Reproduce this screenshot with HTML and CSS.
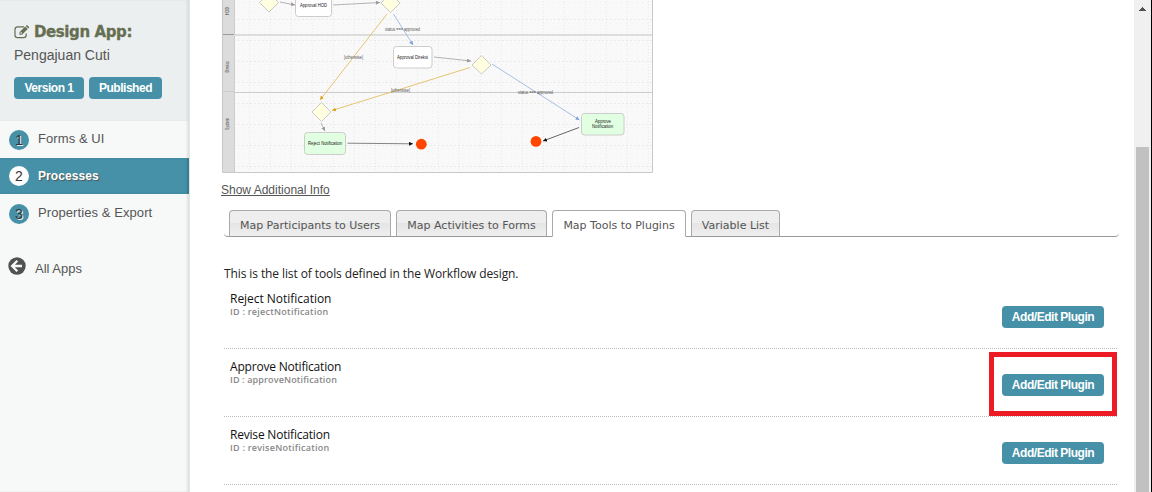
FILE: index.html
```html
<!DOCTYPE html>
<html lang="en">
<head>
<meta charset="utf-8">
<title>Design App: Pengajuan Cuti</title>
<link rel="stylesheet" href="styles.css">
</head>
<body>
<div class="app">
  <aside class="sidebar">
    <header class="app-head">
      <h1 class="app-title"><svg class="edit-icon" viewBox="0 0 16 14" width="16" height="14"><path d="M10 1.8H3.5Q1 1.8 1 4.2v6.1q0 2.4 2.5 2.4h6.2q2.5 0 2.5-2.4V8.5" fill="none" stroke="currentColor" stroke-width="1.2"/><path fill-rule="evenodd" d="M5.5 7.2 11.2 1.5 13.7 4 8 9.7H5.5zM6.4 7.7v1h1l.8-.8-1-1zM11.8.9l.5-.5q.6-.6 1.2 0l1.3 1.3q.6.6 0 1.2l-.5.5z" fill="currentColor"/></svg><span class="title-text">Design App:</span></h1>
      <div class="app-name">Pengajuan Cuti</div>
      <div class="badges"><span class="button version">Version 1</span><span class="button published">Published</span></div>
    </header>
    <nav class="nav">
      <a class="nav-item"><span class="step">1</span>Forms &amp; UI</a>
      <a class="nav-item active"><span class="step">2</span>Processes</a>
      <a class="nav-item"><span class="step">3</span>Properties &amp; Export</a>
    </nav>
    <a class="all-apps"><svg width="18" height="18" viewBox="0 0 18 18"><circle cx="9" cy="9" r="8.7" fill="#505252"/><path d="M9.3 3.8 4.1 9l5.2 5.2M4.8 9h9.2" fill="none" stroke="#f7f9f8" stroke-width="2.3"/></svg>All Apps</a>
  </aside>
  <main class="main">
    <svg class="diagram" width="432" height="173" viewBox="222 0 432 173">
      <defs>
        <pattern id="minor" x="222" y="2" width="5.25" height="5.2" patternUnits="userSpaceOnUse"><rect width="1" height="1" fill="#efefef"/></pattern>
        <pattern id="dots" x="228" y="19" width="21" height="3" patternUnits="userSpaceOnUse"><rect width="1" height="1" fill="#ebebeb"/></pattern>
        <pattern id="rows" x="222" y="19" width="4" height="21" patternUnits="userSpaceOnUse"><rect width="1.5" height="1" fill="#e5e5e5"/></pattern>
        <marker id="gray" markerWidth="5" markerHeight="5" refX="4" refY="2" orient="auto" markerUnits="userSpaceOnUse"><path d="M0 0 4 2 0 4z" fill="#999"/></marker>
        <marker id="black" markerWidth="5" markerHeight="5" refX="4" refY="2" orient="auto" markerUnits="userSpaceOnUse"><path d="M0 0 4 2 0 4z" fill="#111"/></marker>
        <marker id="gold" markerWidth="5" markerHeight="5" refX="4" refY="2" orient="auto" markerUnits="userSpaceOnUse"><path d="M0 0 4 2 0 4z" fill="#d9a520"/></marker>
        <marker id="blue" markerWidth="5" markerHeight="5" refX="4" refY="2" orient="auto" markerUnits="userSpaceOnUse"><path d="M0 0 4 2 0 4z" fill="#7d9fdd"/></marker>
      </defs>
      <rect x="222" width="431" height="173" fill="#f9f9f9"/>
      <rect x="234" width="418" height="172" fill="url(#minor)"/>
      <rect x="234" width="418" height="172" fill="url(#dots)"/>
      <rect x="234" width="418" height="172" fill="url(#rows)"/>
      <rect x="222" width="12" height="172" fill="#dcdcdc"/>
      <path d="M234.5 0V172" stroke="#ccc"/>
      <path d="M234 35H652" stroke="#ddd" stroke-width="2"/>
      <path d="M222 34.5H234" stroke="#999"/>
      <path d="M234 92.5H652M222 91.5H234" stroke="#ccc"/>
      <path d="M222.5 0V172.5H652.5V0" fill="none" stroke="#c8c8c8"/>
      <g class="lane" text-anchor="middle">
        <text transform="translate(229 11) rotate(-90)" textLength="8" lengthAdjust="spacingAndGlyphs">HOD</text>
        <text transform="translate(229 67) rotate(-90)" textLength="11" lengthAdjust="spacingAndGlyphs">Direksi</text>
        <text transform="translate(229 124) rotate(-90)" textLength="12" lengthAdjust="spacingAndGlyphs">System</text>
      </g>
      <g fill="none" stroke-width=".9">
        <g stroke="#aaa"><path d="M280 2 295 5" marker-end="url(#gray)"/><path d="M333 5 380 2.5" marker-end="url(#gray)"/><path d="M434 57 471 61" marker-end="url(#gray)"/><path d="M321 123 325 131" marker-end="url(#gray)"/></g>
        <g stroke="#e4bd62"><path d="M387 14 320 100" marker-end="url(#gold)"/><path d="M470 67.5 332 110.5" marker-end="url(#gold)"/></g>
        <g stroke="#9eb7e3"><path d="M393.500 14 413 45" marker-end="url(#blue)"/><path d="M492 64 579.500 120" marker-end="url(#blue)"/></g>
        <path d="M347.500 143.200 413 143.800" stroke="#777" marker-end="url(#black)"/><path d="M579 127.500 543 141" stroke="#555" marker-end="url(#black)"/>
      </g>
      <g fill="#ffffdf" stroke="#c9c9c9"><path d="M269-7 278.500 2.500 269 12 259.500 2.500z"/><path d="M390.500-6.500 400 3 390.500 12.500 381 3z"/><path d="M481.500 55.500 491 65 481.500 74 472 65z"/><path d="M321.500 102.500 331 112 321.500 121.500 312 112z"/></g>
      <g fill="#fff" stroke="#ccc"><rect x="295.500" y="-5" width="36" height="21.500" rx="3"/><rect x="393.500" y="46.500" width="38.500" height="21.500" rx="3"/></g>
      <g fill="#e1ffe1" stroke="#ccc"><rect x="304.500" y="132.500" width="41" height="22" rx="3"/><rect x="581.500" y="113.500" width="42.500" height="21.500" rx="3"/></g>
      <circle cx="421.300" cy="144.200" r="5.400" fill="#ff4500"/><circle cx="536" cy="141.400" r="5.400" fill="#ff4500"/>
      <g class="node">
        <text x="300" y="7" textLength="27" lengthAdjust="spacingAndGlyphs">Approval HOD</text>
        <text x="397" y="59" textLength="31" lengthAdjust="spacingAndGlyphs">Approval Direksi</text>
        <text x="308" y="145.300" textLength="34" lengthAdjust="spacingAndGlyphs">Reject Notification</text>
        <text x="595" y="123" textLength="16" lengthAdjust="spacingAndGlyphs">Approve</text>
        <text x="592" y="128.200" textLength="21" lengthAdjust="spacingAndGlyphs">Notification</text>
      </g>
      <g class="edge-label">
        <text x="385" y="31" textLength="35" lengthAdjust="spacingAndGlyphs">status === approved</text>
        <text x="344" y="59" textLength="19" lengthAdjust="spacingAndGlyphs">[otherwise]</text>
        <text x="391" y="91.500" textLength="19" lengthAdjust="spacingAndGlyphs">[otherwise]</text>
        <text x="518" y="94" textLength="35" lengthAdjust="spacingAndGlyphs">status === approved</text>
      </g>
    </svg>
    <a class="info-link">Show Additional Info</a>
    <div class="tabs">
      <a class="tab participants">Map Participants to Users</a>
      <a class="tab activities">Map Activities to Forms</a>
      <a class="tab tools selected">Map Tools to Plugins</a>
      <a class="tab variables">Variable List</a>
    </div>
    <section class="panel">
      <p class="intro">This is the list of tools defined in the Workflow design.</p>
      <div class="tool"><div class="tool-text"><div class="tool-name n1">Reject Notification</div><div class="tool-id i1">ID : rejectNotification</div></div><span class="button plugin">Add/Edit Plugin</span></div>
      <div class="tool marked"><div class="tool-text"><div class="tool-name n2">Approve Notification</div><div class="tool-id i2">ID : approveNotification</div></div><span class="button plugin">Add/Edit Plugin</span></div>
      <div class="tool"><div class="tool-text"><div class="tool-name n3">Revise Notification</div><div class="tool-id i3">ID : reviseNotification</div></div><span class="button plugin">Add/Edit Plugin</span></div>
    </section>
  </main>
  <div class="scrollbar"><svg width="7" height="4" viewBox="0 0 7 4" shape-rendering="crispEdges"><path d="M3 0h1v1h1v1h1v1h1v1H0V3h1V2h1V1h1z" fill="#505050"/></svg><div class="thumb"></div></div>
</div>
</body>
</html>
```
FILE: styles.css
```css
*, *::after { box-sizing: border-box; }
body { margin: 0; background: #fff; font-family: "Liberation Sans", Arial, sans-serif; color: #555; }
.app { display: flex; width: 1152px; height: 492px; overflow: hidden; }

.sidebar { width: 190px; flex: none; background: #f7f9f8; border-right: 1px solid #e4e5e5; box-shadow: inset -2px 0 2px #dfe2e2; }
.app-head { height: 121px; padding: 22px 0 0 14px; background: #ebeff0; box-shadow: inset -2px 0 2px #d9dddd; }
.app-title { display: flex; align-items: center; gap: 4px; margin: 0; height: 20px; color: #666e51; font: bold 15px/20px "DejaVu Sans", Verdana, sans-serif; }
.edit-icon { flex: none; }
.title-text { white-space: nowrap; letter-spacing: -.4px; -webkit-text-stroke: .3px #666e51; }
.app-name { margin-top: 4px; font-size: 14px; line-height: 18px; }
.badges { display: flex; gap: 5px; margin-top: 13px; }
.button { display: flex; align-items: center; justify-content: center; height: 22px; border-radius: 4px; background: #4691a8; color: #fff; font-size: 12px; font-weight: bold; letter-spacing: -.47px; white-space: nowrap; }
.version { width: 70px; }
.published { width: 73px; }
.nav { display: flex; flex-direction: column; }
.nav-item { display: flex; align-items: center; gap: 9px; height: 37px; padding: 0 0 2px 9px; font-size: 13px; letter-spacing: .08px; }
.step { display: flex; align-items: center; justify-content: center; width: 20px; height: 20px; border-radius: 50%; background: #4691a8; color: #333; font-size: 14px; text-shadow: 1px 1px 0 #eee; margin-top: 2px; }
.active { height: 36px; padding-bottom: 0; margin-bottom: 1px; background: #4691a8; color: #fff; font-size: 12px; font-weight: bold; text-shadow: 1px 1px 1px #555; box-shadow: inset -2px 0 2px #39798d; }
.active .step { background: #fff; color: #333; font-weight: normal; text-shadow: none; margin-top: 0; }
.all-apps { display: flex; align-items: center; gap: 9px; margin: 26px 0 0 8px; height: 20px; font-size: 13px; }
.all-apps svg { margin-top: -4px; }

.main { flex: 1; min-width: 0; padding-left: 32px; display: flex; flex-direction: column; align-items: flex-start; }
.diagram { display: block; flex: none; font: 5px "Liberation Sans", Arial, sans-serif; }
.node { fill: #222; }
.lane { fill: #444; }
.edge-label { fill: #555; font-size: 4.5px; }
.info-link { margin: 9px 0 0 -1px; font-size: 12px; line-height: 16px; text-decoration: underline; }
.tabs { display: flex; gap: 5px; width: 895px; height: 27px; margin: 12px 0 0 2px; padding-left: 5px; border-bottom: 1px solid #999; border-radius: 0 0 4px 4px; flex: none; }
.tab { height: 27px; display: flex; align-items: center; justify-content: center; padding-top: 4px; border: 1px solid #aaa; border-bottom-color: #999; border-radius: 4px 4px 0 0; background: linear-gradient(#eee 0 50%, #e5e5e5 50%, #efefef); font: 11px "DejaVu Sans", Verdana, sans-serif; white-space: nowrap; }
.participants { width: 162px; }
.activities { width: 151px; }
.tools { width: 134px; }
.variables { width: 89px; }
.tab.selected { background: #fff; border-bottom-color: #fff; }

.panel { width: 893px; margin-left: 2px; padding-top: 29px; font-family: "Trebuchet MS", "Open Sans", sans-serif; flex: none; }
.intro { margin: 0; height: 16px; font-size: 12px; line-height: 16px; letter-spacing: -.1px; color: #222; }
.tool { display: flex; justify-content: space-between; height: 68px; padding: 10px 13px 0 6px; border-bottom: 1px dotted #bbb; position: relative; }
.intro + .tool { padding-top: 9px; height: 67px; }
.tool-name { color: #111; font-size: 12px; line-height: 16px; }
.n1 { letter-spacing: -.03px; }
.n2, .n3 { letter-spacing: -.2px; }
.tool-id { color: #888; font-size: 9px; line-height: 10px; font-weight: 600; letter-spacing: .25px; }
.i2 { letter-spacing: .14px; }
.plugin { width: 102px; margin-top: 15px; font-family: "Liberation Sans", Arial, sans-serif; }
.marked::after { content: ""; position: absolute; left: 765px; top: 3px; width: 128px; height: 64px; border: 5px solid #ed1c24; }

.scrollbar { width: 18px; flex: none; padding: 7px 2px 0; display: flex; flex-direction: column; align-items: center; background: #f0f0f0; border-right: 1px solid #000; }
.thumb { width: 13px; flex: 1; margin-top: 136px; background: #c1c1c1; }
```
